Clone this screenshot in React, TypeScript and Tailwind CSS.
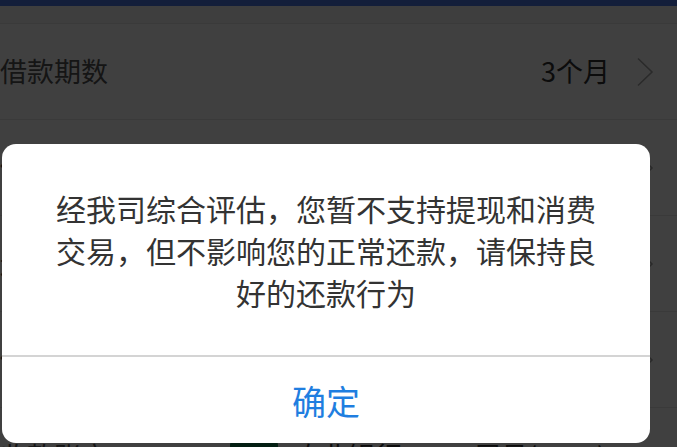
const font = { fontFamily: '"Noto Sans CJK SC", "Noto Sans", sans-serif' };

function Chevron() {
  return (
    <svg width="18" height="30" viewBox="0 0 18 30" fill="none" className="shrink-0">
      <polyline points="2,1.5 16,15 2,28.5" stroke="#a8a8a8" strokeWidth="1.6" strokeLinejoin="miter" />
    </svg>
  );
}

function Row({ label, value }: { label: string; value: string }) {
  return (
    <div className="flex h-[96px] items-center justify-between border-b border-[#e8e8e8] pr-[23px]">
      <span className="text-[27px] text-[#555]">{label}</span>
      <div className="flex items-center gap-[26px]">
        <span className="text-[27px] text-[#333]">{value}</span>
        <Chevron />
      </div>
    </div>
  );
}

export default function App() {
  return (
    <div className="relative h-[447px] w-[677px] overflow-hidden bg-white" style={font}>
      <div className="h-[6px] bg-[#4c78e8]" />
      <div className="h-[18px] border-b border-[#e8e8e8] bg-[#f7f7f7]" />
      <Row label="借款期数" value="3个月" />
      <Row label="借款金额" value="3000.00元" />
      <Row label="还款方式" value="等额本息" />
      <Row label="借款用途" value="日常消费" />
      <div className="flex h-[96px] items-center pr-[23px]">
        <span className="w-[230px] text-[27px] text-[#555]">收款账户</span>
        <span className="mr-[16px] h-[30px] w-[48px] rounded bg-[#0d7a4a]" />
        <span className="w-[180px] text-[27px] text-[#333]">农业银行</span>
        <span className="text-[27px] text-[#333]">尾号(0578)</span>
      </div>

      {/* dim layer */}
      <div className="absolute inset-0 bg-black/75" />

      <div className="absolute left-[2px] top-[144px] w-[648px] overflow-hidden rounded-[14px] bg-white">
        <p className="px-[50px] pb-[42px] pt-[43px] text-center text-[30px] leading-[42px] text-[#333]">
          经我司综合评估，您暂不支持提现和消费交易，但不影响您的正常还款，请保持良好的还款行为
        </p>
        <div className="flex h-[88px] items-center justify-center border-t-2 border-[#d4d4d4] text-[34px] text-[#1f7ee0]">
          确定
        </div>
      </div>
    </div>
  );
}
